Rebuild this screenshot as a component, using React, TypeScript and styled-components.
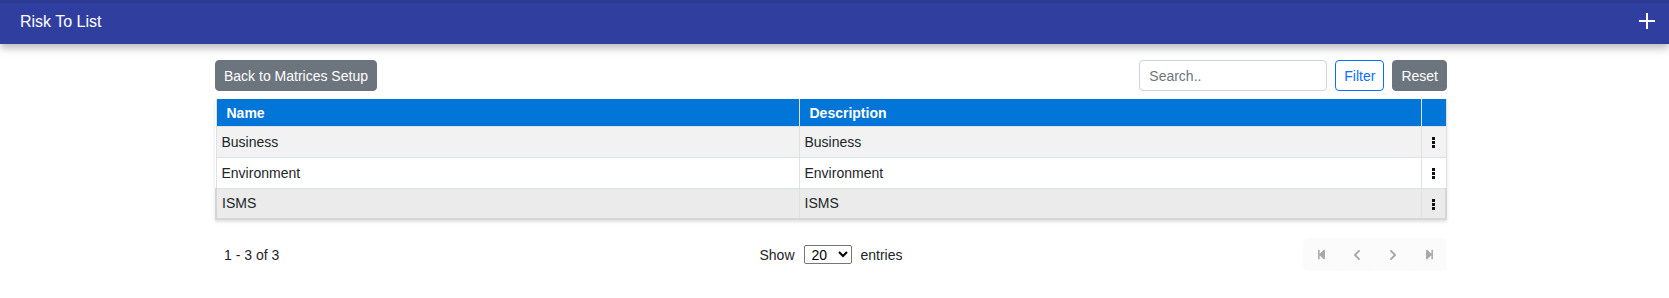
import React, { useState } from 'react';
import styled, { createGlobalStyle } from 'styled-components';
import { FaStepBackward, FaStepForward, FaChevronLeft, FaChevronRight } from 'react-icons/fa';

const GlobalStyle = createGlobalStyle`
  body {
    margin: 0;
    font-family: "Liberation Sans", Arial, sans-serif;
    font-size: 14px;
    color: #212529;
    background: #fff;
  }
  * { box-sizing: border-box; }
`;

const TopBar = styled.header`
  height: 44px;
  background: #303f9f;
  border-top: 3px solid #2c3990;
  box-shadow: 0 4px 8px rgba(0, 0, 0, 0.28);
  display: flex;
  align-items: center;
  justify-content: space-between;
  padding: 0 13px 0 20px;
  color: #fff;
`;

const TopTitle = styled.h1`
  margin: 0 0 3px;
  font-size: 16px;
  font-weight: 400;
`;

const AddButton = styled.button`
  background: none;
  border: 0;
  padding: 0;
  width: 18px;
  height: 18px;
  margin-bottom: 6px;
  display: flex;
  color: #fff;
  cursor: pointer;
`;

const Container = styled.main`
  width: 1232px;
  margin-left: 215px;
  padding-top: 16px;
`;

const Toolbar = styled.div`
  display: flex;
  align-items: center;
  gap: 8px;
  height: 31px;
  margin-bottom: 8px;
`;

const Spacer = styled.div`
  flex: 1;
`;

const Button = styled.button<{ $outline?: boolean }>`
  height: 31px;
  padding: 0 8px;
  font-family: inherit;
  font-size: 14px;
  border-radius: 4px;
  cursor: pointer;
  color: ${(p) => (p.$outline ? '#0d6efd' : '#fff')};
  background: ${(p) => (p.$outline ? '#fff' : '#6c757d')};
  border: 1px solid ${(p) => (p.$outline ? '#0d6efd' : '#6c757d')};
`;

const SearchInput = styled.input`
  width: 188px;
  height: 31px;
  padding: 0 9px;
  font-family: inherit;
  font-size: 14px;
  border: 1px solid #ced4da;
  border-radius: 4px;
  &::placeholder {
    color: #6c757d;
  }
`;

const Table = styled.table`
  width: 100%;
  border-collapse: collapse;
  box-shadow: 0 2px 3px rgba(0, 0, 0, 0.12);
`;

const HeadCell = styled.th<{ $w?: number }>`
  background: #0275d8;
  color: #fff;
  font-weight: 700;
  text-align: left;
  height: 27px;
  padding: 2px 10px 0;
  border: 1px solid #dee2e6;
  border-top: 0;
  width: ${(p) => (p.$w ? `${p.$w}px` : 'auto')};
`;

const Row = styled.tr<{ $bg: string; $active?: boolean }>`
  background: ${(p) => p.$bg};
  td {
    border-bottom: ${(p) => (p.$active ? '2px solid #d6d6d6' : '1px solid #dee2e6')};
  }
  td:first-child {
    border-left: ${(p) => (p.$active ? '2px solid #d6d6d6' : '1px solid #dee2e6')};
  }
  td:last-child {
    border-right: ${(p) => (p.$active ? '2px solid #d6d6d6' : '1px solid #dee2e6')};
  }
`;

const Cell = styled.td`
  height: 31px;
  padding: 0 5px;
  border-right: 1px solid #dee2e6;
`;

const ActionCell = styled(Cell)`
  text-align: center;
  padding: 0;
`;

const Kebab = styled.button`
  background: none;
  border: 0;
  padding: 0;
  display: inline-flex;
  vertical-align: middle;
  cursor: pointer;
`;

const Footer = styled.div`
  display: grid;
  grid-template-columns: 1fr auto 1fr;
  align-items: center;
  margin-top: 18px;
  height: 33px;
`;

const Count = styled.div`
  padding-left: 9px;
`;

const Entries = styled.div`
  display: flex;
  align-items: center;
  gap: 9px;
`;

const Select = styled.select`
  width: 48px;
  height: 19px;
  font-family: inherit;
  font-size: 14px;
  color: #000;
  border: 1px solid #767676;
  border-radius: 2px;
  padding: 0 0 0 3px;
  background: #fff;
`;

const Pager = styled.div`
  justify-self: end;
  display: flex;
  background: #fcfcfc;
  border-radius: 6px;
`;

const PageButton = styled.button`
  width: 36px;
  height: 33px;
  display: flex;
  align-items: center;
  justify-content: center;
  background: #fbfbfb;
  border: 0;
  border-radius: 6px;
  color: #a8a8a8;
  padding: 0;
`;

const rows = [
  { name: 'Business', description: 'Business', bg: '#f2f2f2' },
  { name: 'Environment', description: 'Environment', bg: '#ffffff' },
  { name: 'ISMS', description: 'ISMS', bg: '#ebebeb', active: true },
];

const Dots = () => (
  <svg width="3" height="11" viewBox="0 0 3 11">
    <rect x="0" y="0" width="3" height="3" fill="#111" />
    <rect x="0" y="4" width="3" height="3" fill="#111" />
    <rect x="0" y="8" width="3" height="3" fill="#111" />
  </svg>
);

const App = () => {
  const [size, setSize] = useState('20');

  return (
    <>
      <GlobalStyle />
      <TopBar>
        <TopTitle>Risk To List</TopTitle>
        <AddButton aria-label="Add">
          <svg width="18" height="18" viewBox="0 0 18 18">
            <path d="M9 1v16M1 9h16" stroke="#fff" strokeWidth="2" />
          </svg>
        </AddButton>
      </TopBar>
      <Container>
        <Toolbar>
          <Button>Back to Matrices Setup</Button>
          <Spacer />
          <SearchInput placeholder="Search.." />
          <Button $outline>Filter</Button>
          <Button>Reset</Button>
        </Toolbar>
        <Table>
          <thead>
            <tr>
              <HeadCell $w={583}>Name</HeadCell>
              <HeadCell>Description</HeadCell>
              <HeadCell $w={25} />
            </tr>
          </thead>
          <tbody>
            {rows.map((r) => (
              <Row key={r.name} $bg={r.bg} $active={r.active}>
                <Cell>{r.name}</Cell>
                <Cell>{r.description}</Cell>
                <ActionCell>
                  <Kebab aria-label="Actions">
                    <Dots />
                  </Kebab>
                </ActionCell>
              </Row>
            ))}
          </tbody>
        </Table>
        <Footer>
          <Count>1 - 3 of 3</Count>
          <Entries>
            Show
            <Select value={size} onChange={(e) => setSize(e.target.value)}>
              <option>10</option>
              <option>20</option>
              <option>50</option>
            </Select>
            entries
          </Entries>
          <Pager>
            <PageButton disabled><FaStepBackward size={11} /></PageButton>
            <PageButton disabled><FaChevronLeft size={12} /></PageButton>
            <PageButton disabled><FaChevronRight size={12} /></PageButton>
            <PageButton disabled><FaStepForward size={11} /></PageButton>
          </Pager>
        </Footer>
      </Container>
    </>
  );
};

export default App;
